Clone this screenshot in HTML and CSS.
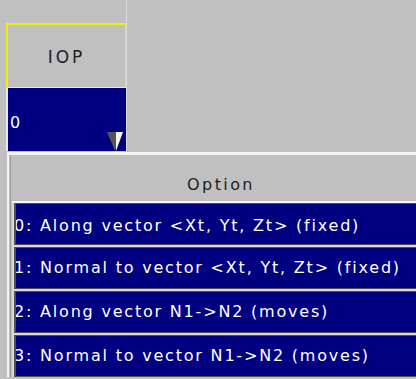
FILE: index.html
```html
<!DOCTYPE html>
<html>
<head>
	<title>IOP Option</title>
	<link rel="stylesheet" href="styles.css">
</head>
<body>
	<div class="col">
		<div class="head">IOP</div>
		<div class="cell">
			<span class="value">0</span>
			<svg class="arrow" width="16" height="19" viewBox="0 0 16 19">
				<polygon points="0,0 16,0 8,19" fill="#555555" />
				<polygon points="9,0 16,0 9,19" fill="#f4f4f4" />
			</svg>
		</div>
	</div>
	<div class="menu">
		<div class="menu-inner">
			<div class="menu-head">Option</div>
			<div class="opts">
				<div class="opt first">0: Along vector &lt;Xt, Yt, Zt&gt; (fixed)</div>
				<div class="opt">1: Normal to vector &lt;Xt, Yt, Zt&gt; (fixed)</div>
				<div class="opt">2: Along vector N1-&gt;N2 (moves)</div>
				<div class="opt">3: Normal to vector N1-&gt;N2 (moves)</div>
			</div>
		</div>
	</div>
</body>
</html>
```

FILE: styles.css
```css
body {
	margin: 0;
	padding: 0;
	height: 379px;
	overflow: hidden;
	background-color: #c0c0c0;
	font-family: "DejaVu Sans", "Liberation Sans", sans-serif;
	font-size: 16px;
	letter-spacing: 1.8px;
}

.col {
	margin-left: 6px;
	width: 120px;
	padding-top: 23px;
	border-right: 1px solid #dcdcdc;
}
.head {
	box-sizing: border-box;
	height: 65px;
	padding-top: 2px;
	border-top: 2px solid #f0f000;
	border-left: 2px solid #f0f000;
	border-right: 1px solid #e0e060;
	border-bottom: 1px solid #e8e8e8;
	display: flex;
	align-items: center;
	justify-content: center;
	color: #202020;
	font-size: 17px;
	letter-spacing: 3px;
}
.cell {
	height: 63px;
	border-left: 2px solid #e8e8e8;
	padding-left: 2px;
	background-color: #000080;
	color: white;
	display: flex;
	justify-content: space-between;
}
.value {
	align-self: center;
	padding-top: 5px;
}
.arrow {
	align-self: flex-end;
	margin-right: 3px;
}

.menu {
	margin-left: 7px;
	margin-top: 1px;
	width: 420px;
	border-top: 3px solid #f4f4f4;
	border-left: 2px solid #f4f4f4;
	padding-left: 1px;
}
.menu-inner {
	border-left: 1px solid #9a9a9a;
	padding-left: 1px;
}
.menu-head {
	box-sizing: border-box;
	height: 48px;
	padding-top: 12px;
	border-bottom: 2px solid #f4f4f4;
	display: flex;
	align-items: center;
	justify-content: center;
	color: #202020;
	letter-spacing: 2.4px;
}
.opts {
	display: flex;
	flex-direction: column;
	gap: 2px;
	padding-left: 2px;
	background-color: #d8d8d8;
}
.opt {
	height: 40px;
	line-height: 40px;
	border-top: 1px solid #505050;
	border-bottom: 1px solid #505050;
	border-left: 2px solid #505050;
	background-color: #000080;
	color: white;
	white-space: nowrap;
	overflow: hidden;
	text-indent: -2px;
}
.first {
	box-sizing: border-box;
	height: 42px;
	padding-top: 4px;
	line-height: 36px;
}
```
